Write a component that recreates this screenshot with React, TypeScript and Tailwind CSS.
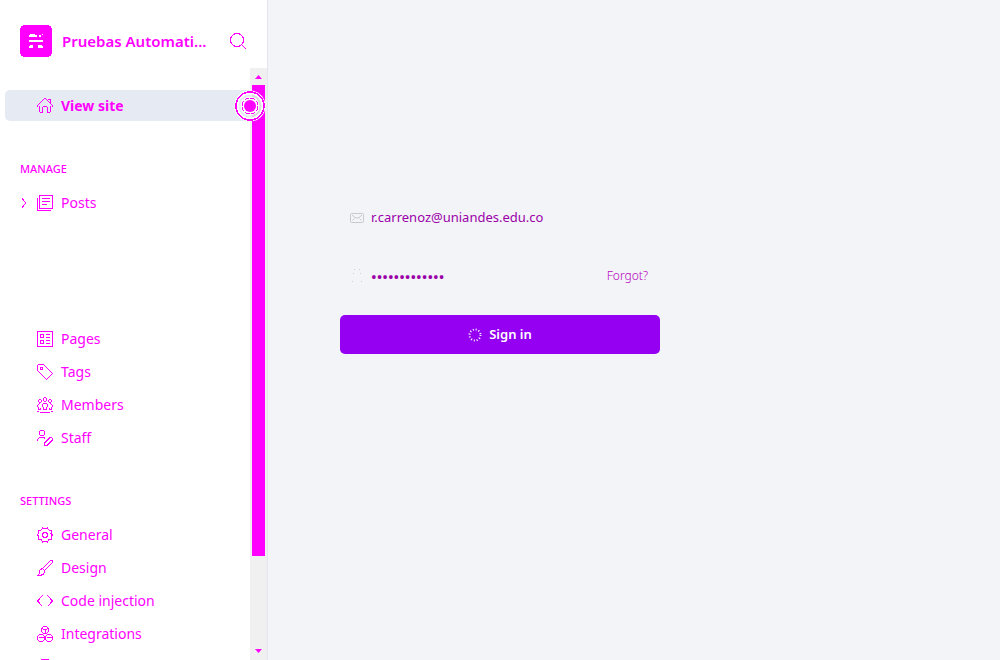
import type { ReactNode } from "react";

function Icon({ children, className = "size-4" }: { children: ReactNode; className?: string }) {
  return (
    <svg
      viewBox="0 0 16 16"
      className={`${className} shrink-0`}
      fill="none"
      stroke="currentColor"
      strokeWidth="1"
      shapeRendering="crispEdges"
      aria-hidden="true"
    >
      {children}
    </svg>
  );
}

const icons = {
  home: (
    <Icon>
      <path d="M.5 8.500v-1l6-6 1-1h1l1 1 6 6v1M2.500 7.500v6l1 1h2v-5l1-1h3l1 1v5h2l1-1v-6M10.500 1.500h3v4" />
    </Icon>
  ),
  posts: (
    <Icon>
      <path d="M2.500.5h13v13h-13zM.5 2.500v13h13M5 3.500h8M5 6.500h8M5 9.500h5" />
    </Icon>
  ),
  pages: (
    <Icon>
      <rect x=".5" y=".5" width="15" height="15" rx="1" />
      <path d="M3.500 3.500h3v3h-3zM3.500 9.500h3v3h-3zM9 3.500h4M9 6.500h4M9 9.500h4M9 12.500h4" />
    </Icon>
  ),
  tags: (
    <Icon>
      <path d="M1.500.5h5l9 9-6 6-9-9v-5z" />
      <circle cx="4.500" cy="4.500" r="1" />
    </Icon>
  ),
  members: (
    <Icon className="size-4">
      <path d="M6.500 1.500l1-1h1l1 1v2l-1 1h-1l-1-1zM1.500 4.500v-1l1-1h1l1 1v1l-1 1h-1zM11.500 4.500v-1l1-1h1l1 1v1l-1 1h-1z" />
      <path d="M6.500 12.500v-2l-1-1v-2l1-1.500h3l1 1.500v2l-1 1v2zM2.500 6.500l-2 2v1l1 1v2h2v-2M13.500 6.500l2 2v1l-1 1v2h-2v-2M0 14.500h2M3 15.500h10M14 14.500h2" />
    </Icon>
  ),
  staff: (
    <Icon>
      <path d="M2.500 1.500l1-1h3l1 1v3l-1 1h-3l-1-1zM.5 11v-1.500l2-2h4l2 1M7.500 15.500v-2.500l5.500-5.500h1.500l1 1v1.500l-5.500 5.500z" />
    </Icon>
  ),
  general: (
    <Icon>
      <path d="M5.500.5 8 2l2.500-1.500 1 2.500 3 .5-.5 3L15.500 8 14 10l.5 2.500-3 .5-1 2.500L8 14l-2.500 1.500-1-2.500-3-.5L2 10 .5 8 2 6l-.5-2.500 3-.5z" />
      <path d="M5.500 7l1.500-1.500h2L10.500 7v2L9 10.500H7L5.500 9z" />
    </Icon>
  ),
  design: (
    <Icon>
      <path d="M5.500 8.500l8-8h2v2l-8 8zM5.500 8.500l-2 1-1 1v3l-2 2h3l3-1.500 1-1.500v-2" />
    </Icon>
  ),
  code: (
    <Icon>
      <path d="M5.500 2.500.5 8l5 5.500M10.500 2.500l5 5.500-5 5.500" />
    </Icon>
  ),
  integrations: (
    <Icon>
      <path d="M6.500.5h3l2 2v3l-2 2h-3l-2-2v-3zM5 2.500l3 1.500 3-1.500M8 4v3" />
      <path d="M2.500 8.500h3l2 2v3l-2 2h-3l-2-2v-3zM1.500 11.500h5M10.500 8.500h3l2 2v3l-2 2h-3l-2-2v-3zM9.500 11.500h5" />
    </Icon>
  ),
  labs: (
    <Icon>
      <path d="M4 .5h8M5.500.5v6l-4 8h13l-4-8v-6" />
    </Icon>
  ),
};

function NavItem({ icon, label, active = false, expandable = false }: {
  icon: ReactNode;
  label?: string;
  active?: boolean;
  expandable?: boolean;
}) {
  return (
    <a
      href="#"
      aria-label={label ?? "Labs"}
      className={`flex h-[31px] shrink-0 items-center rounded-l-[5px] pl-3.5 text-sm ${
        active ? "bg-[#e6eaf2] font-bold" : "font-normal"
      }`}
    >
      <span className="flex w-[18px] shrink-0">
        {expandable && (
          <svg viewBox="0 0 10 10" className="size-2.5" fill="none" stroke="currentColor" shapeRendering="crispEdges" aria-hidden="true">
            <path d="m3 .5 4 4.500-4 4.500" />
          </svg>
        )}
      </span>
      {icon}
      <span className="ml-2">{label}</span>
    </a>
  );
}

function NavSection({ title, children }: { title: string; children: ReactNode }) {
  return (
    <section className="mt-[37px] flex flex-col gap-0.5">
      <h2 className="mb-1.5 h-[21px] pl-[15px] text-[11px] leading-[21px] font-medium">{title}</h2>
      {children}
    </section>
  );
}

function Scrollbar() {
  return (
    <div className="flex w-[17px] shrink-0 flex-col items-center bg-[#f0f0f0]" aria-hidden="true">
      <svg viewBox="0 0 17 17" className="h-[17px] w-[17px] shrink-0" fill="currentColor">
        <path d="M5 11h7L8.500 7z" />
      </svg>
      <div className="flex w-full flex-1 flex-col px-0.5">
        <div className="h-[84.4%] w-[13px] bg-[#ff00ff]" />
      </div>
      <svg viewBox="0 0 17 17" className="h-[17px] w-[17px] shrink-0" fill="currentColor">
        <path d="M5 6h7l-3.500 4z" />
      </svg>
    </div>
  );
}

function ClickMarker() {
  return (
    <svg viewBox="0 0 32 32" className="pointer-events-none absolute top-[22px] right-[1px] size-8" fill="none" aria-hidden="true">
      <circle cx="16" cy="16" r="15.500" fill="#fff" />
      <circle cx="16" cy="16" r="14" stroke="#ff00ff" strokeWidth="1.500" shapeRendering="crispEdges" />
      <circle cx="16" cy="16" r="11.500" fill="#e6eaf2" />
      <path d="M18 4.700a11.500 11.500 0 0 1 0 22.600z" fill="#dadada" />
      <circle cx="16" cy="16" r="9.500" fill="#fff" />
      <circle cx="16" cy="16" r="8" stroke="#ff00ff" strokeDasharray="5 1.280" shapeRendering="crispEdges" />
      <circle cx="16" cy="16" r="6" fill="#ff00ff" />
    </svg>
  );
}

function Sidebar() {
  return (
    <aside className="flex w-[268px] shrink-0 flex-col border-r border-[#e3e6ee] bg-white text-[#ff00ff]">
      <header className="flex h-[68px] shrink-0 items-center pt-3.5 pr-5 pl-5">
        <svg viewBox="0 0 32 32" className="size-8 shrink-0" shapeRendering="crispEdges" aria-hidden="true">
          <rect width="32" height="32" rx="5" fill="#ff00ff" />
          <path d="M10 9h5v1h2v2H9v-2h1zM19 10h2v2h-2zM22 9h1v1h-1zM9 15h14v2H9zM10 20h3v3H9v-2h1zM18 20h4v1h1v2h-5z" fill="#fff" />
        </svg>
        <span className="ml-2.5 truncate text-[15px] font-semibold">Pruebas Automati...</span>
        <button type="button" aria-label="Search" className="ml-auto flex">
          <svg viewBox="0 0 17 17" className="size-[17px]" fill="none" stroke="currentColor" shapeRendering="crispEdges" aria-hidden="true">
            <circle cx="7" cy="7" r="6.500" />
            <path d="m11.500 11.500 5 5" />
          </svg>
        </button>
      </header>
      <div className="relative flex min-h-0 flex-1">
        <nav className="flex min-w-0 flex-1 flex-col overflow-hidden pt-[22px] pl-[5px]">
          <NavItem icon={icons.home} label="View site" active />
          <NavSection title="MANAGE">
            <NavItem icon={icons.posts} label="Posts" expandable />
            <div className="mt-[103px] flex flex-col gap-0.5">
              <NavItem icon={icons.pages} label="Pages" />
              <NavItem icon={icons.tags} label="Tags" />
              <NavItem icon={icons.members} label="Members" />
              <NavItem icon={icons.staff} label="Staff" />
            </div>
          </NavSection>
          <NavSection title="SETTINGS">
            <NavItem icon={icons.general} label="General" />
            <NavItem icon={icons.design} label="Design" />
            <NavItem icon={icons.code} label="Code injection" />
            <NavItem icon={icons.integrations} label="Integrations" />
            <NavItem icon={icons.labs} />
          </NavSection>
        </nav>
        <Scrollbar />
        <ClickMarker />
      </div>
    </aside>
  );
}

function SignIn() {
  return (
    <main className="min-w-0 flex-1 px-[72px] pt-[199px]">
      <form className="flex w-full max-w-80 flex-col" onSubmit={(e) => e.preventDefault()}>
        <label className="flex h-[38px] items-center pl-2.5">
          <svg viewBox="0 0 14 10" className="h-2.5 w-3.5 shrink-0" fill="none" stroke="#c9c9cd" aria-hidden="true">
            <rect x=".5" y=".5" width="13" height="9" rx="1" />
            <path d="m2 2 3 2.500q2 1 4 0L12 2M2.500 7.500l2-2M11.500 7.500l-2-2" />
          </svg>
          <input
            type="email"
            aria-label="Email address"
            defaultValue="r.carrenoz@uniandes.edu.co"
            className="ml-[7px] min-w-0 flex-1 bg-transparent text-[13px] text-[#9b00a8] outline-none"
          />
        </label>
        <div className="mt-5 flex h-[38px] items-center pr-3 pl-2.5">
          <svg viewBox="0 0 14 14" className="size-3.5 shrink-0" fill="#cfcfd3" aria-hidden="true">
            <path d="M4 0h1v1H4zM9 0h1v1H9zM3 4h1v1H3zM10 4h1v1h-1zM2 12h1v1H2zM11 12h1v1h-1z" />
          </svg>
          <input
            type="password"
            aria-label="Password"
            defaultValue="aaaaaaaaaaaaa"
            className="ml-[7px] min-w-0 flex-1 bg-transparent text-[15px] font-medium text-[#9b00a8] outline-none"
          />
          <button type="button" className="text-xs font-light text-[#b700bd]">Forgot?</button>
        </div>
        <button
          type="submit"
          className="mt-5 flex h-[39px] items-center justify-center gap-[7px] rounded-[5px] bg-[#9500f2] text-[13px] font-semibold text-white"
        >
          <svg viewBox="0 0 14 14" className="size-3.5" stroke="currentColor" aria-hidden="true">
            <circle cx="7" cy="7" r="5.500" fill="none" strokeWidth="2" strokeDasharray="1 1.880" />
          </svg>
          Sign in
        </button>
      </form>
    </main>
  );
}

export default function App() {
  return (
    <div className="flex h-screen overflow-hidden bg-[#f2f4f8] font-['Noto_Sans','Open_Sans',sans-serif]">
      <Sidebar />
      <SignIn />
    </div>
  );
}
